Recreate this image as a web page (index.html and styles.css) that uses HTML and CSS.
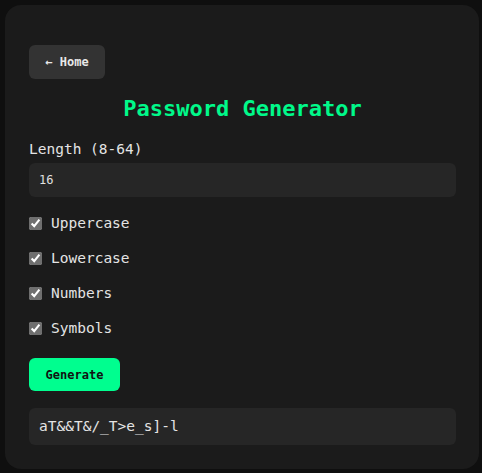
FILE: index.html
```html
<!DOCTYPE html>
<html lang="en">
<head>
<meta charset="utf-8">
<title>Password Generator</title>
<link rel="stylesheet" href="styles.css">
</head>
<body>
<main class="card">
  <button class="home-btn" type="button">← Home</button>
  <h1 class="title">Password Generator</h1>
  <label class="field-label" for="len">Length (8-64)</label>
  <input class="len-input" id="len" type="number" value="16" min="8" max="64">
  <div class="options">
    <label class="option"><input type="checkbox" checked><span>Uppercase</span></label>
    <label class="option"><input type="checkbox" checked><span>Lowercase</span></label>
    <label class="option"><input type="checkbox" checked><span>Numbers</span></label>
    <label class="option"><input type="checkbox" checked><span>Symbols</span></label>
  </div>
  <button class="gen-btn" type="button">Generate</button>
  <div class="output">aT&amp;&amp;T&amp;/_T&gt;e_s]-l</div>
</main>
</body>
</html>
```
FILE: styles.css
```css
* { box-sizing: border-box; }
html, body { margin: 0; }
body {
  background: #0f0f0f;
  padding: 5px 3px 4px 5px;
  font-family: "DejaVu Sans Mono", "Liberation Mono", monospace;
  color: #e0e0e0;
}
.card {
  background: #1b1b1b;
  border-radius: 16px;
  padding: 40px 23px 24px 24px;
  display: flex;
  flex-direction: column;
  align-items: stretch;
}
.home-btn {
  align-self: flex-start;
  width: 76px;
  height: 34px;
  padding: 0;
  background: #333333;
  color: #e8e8e8;
  border: none;
  border-radius: 6px;
  font-family: inherit;
  font-size: 12px;
  font-weight: bold;
}
.title {
  margin: 15px 0 0;
  height: 30px;
  line-height: 30px;
  text-align: center;
  font-size: 22px;
  font-weight: bold;
  color: #00f98a;
}
.field-label {
  margin-top: 15px;
  height: 20px;
  line-height: 20px;
  font-size: 14.5px;
  color: #e4e4e4;
}
.len-input {
  margin-top: 4px;
  height: 34px;
  padding: 0 10px;
  background: #262626;
  border: none;
  border-radius: 6px;
  color: #e0e0e0;
  font-family: inherit;
  font-size: 12px;
  outline: none;
  -moz-appearance: textfield;
}
.len-input::-webkit-inner-spin-button,
.len-input::-webkit-outer-spin-button { -webkit-appearance: none; margin: 0; }
.options {
  margin-top: 16px;
  display: flex;
  flex-direction: column;
  gap: 15px;
}
.option {
  display: flex;
  align-items: center;
  height: 20px;
  font-size: 14.5px;
  color: #e4e4e4;
}
.option input {
  margin: 0 9px 0 0;
  width: 13px;
  height: 13px;
  accent-color: #6f6f6f;
}
.gen-btn {
  margin-top: 20px;
  align-self: flex-start;
  width: 91px;
  height: 33px;
  padding: 0;
  background: #00fe8f;
  color: #111;
  border: none;
  border-radius: 6px;
  font-family: inherit;
  font-size: 12px;
  font-weight: bold;
}
.output {
  margin-top: 17px;
  height: 37px;
  line-height: 37px;
  padding: 0 10px;
  background: #262626;
  border-radius: 6px;
  font-size: 14.5px;
  color: #e4e4e4;
}
```
